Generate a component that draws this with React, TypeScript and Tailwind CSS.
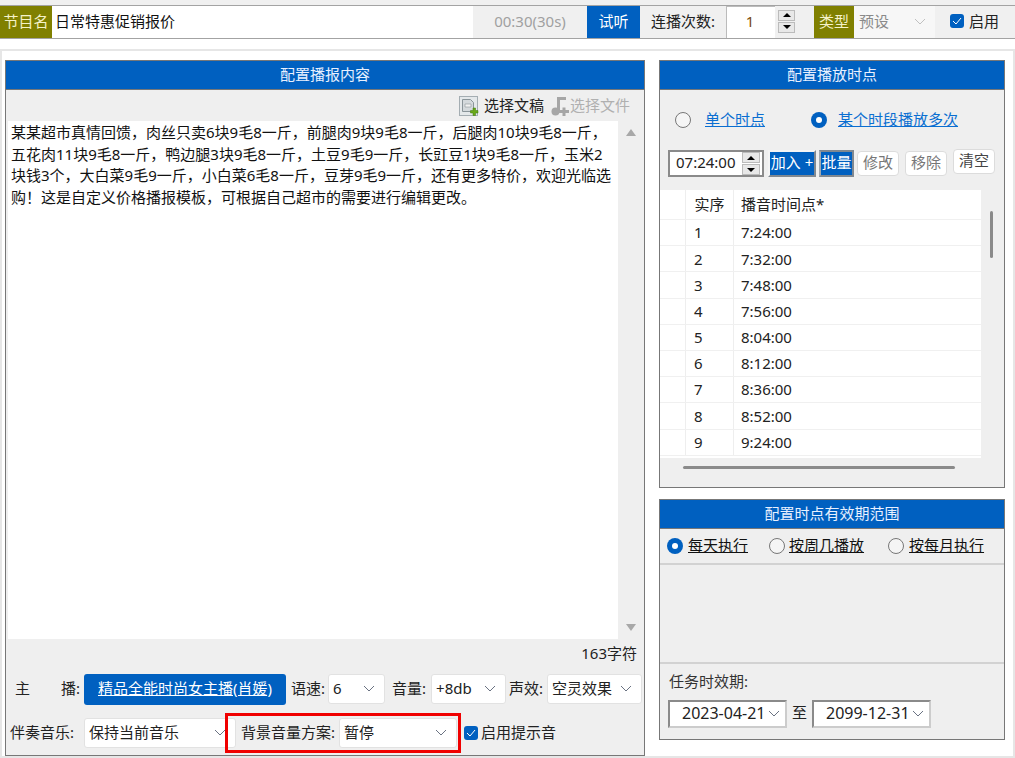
import React from 'react';

const FONT = 'font-["Noto_Sans","Noto_Sans_CJK_SC",sans-serif]';

const ROWS = ['7:24:00', '7:32:00', '7:48:00', '7:56:00', '8:04:00', '8:12:00', '8:36:00', '8:52:00', '9:24:00'];

const Chevron = ({ className = 'text-gray-500' }: { className?: string }) => (
  <svg width="12" height="7" viewBox="0 0 12 7" fill="none" stroke="currentColor" strokeWidth="1" className={className}>
    <path d="M1 1l5 5 5-5" />
  </svg>
);

const Select = ({ value, className }: { value: string; className: string }) => (
  <div className={`flex h-[30px] shrink-0 items-center justify-between rounded-[3px] border border-[#e2e2e2] bg-white pb-[2px] pl-[4px] pr-[9px] text-[#222] ${className}`}>
    <span>{value}</span>
    <Chevron />
  </div>
);

const Radio = ({ on, className = '' }: { on?: boolean; className?: string }) =>
  on ? (
    <span className={`flex size-[16px] shrink-0 items-center justify-center rounded-full bg-[#0060c0] ${className}`}>
      <span className="size-[6px] rounded-full bg-white" />
    </span>
  ) : (
    <span className={`block size-[16px] shrink-0 rounded-full border border-[#777] bg-white/40 ${className}`} />
  );

const Check = () => (
  <span className="flex size-[14px] shrink-0 items-center justify-center rounded-[3px] bg-[#0060c0]">
    <svg width="10" height="8" viewBox="0 0 10 8" fill="none" stroke="white" strokeWidth="1">
      <path d="M1 4l3 3 5-6" />
    </svg>
  </span>
);

const Spinner = ({ className }: { className: string }) => (
  <div className={`flex flex-col gap-[1px] ${className}`}>
    <span className="flex h-[11px] items-center justify-center border border-[#bbb] bg-[#e8e8e8]">
      <span className="size-0 border-x-[4px] border-b-[4px] border-x-transparent border-b-black" />
    </span>
    <span className="flex h-[11px] items-center justify-center border border-[#bbb] bg-[#e8e8e8]">
      <span className="size-0 border-x-[4px] border-t-[4px] border-x-transparent border-t-black" />
    </span>
  </div>
);

const PanelHeader = ({ title }: { title: string }) => (
  <div className="flex h-[29px] shrink-0 items-center justify-center border-b border-[#777] bg-[#0060c0] pb-[2px] text-[#e8f0ff]">
    {title}
  </div>
);

const SmallButton = ({ label, dark }: { label: string; dark?: boolean }) => (
  <div className={`flex h-[25px] w-[42px] items-center justify-center rounded-[4px] border border-[#dcdcdc] bg-white pb-[2px] ${dark ? '-mt-[2px] text-[#444]' : 'text-[#777]'}`}>
    {label}
  </div>
);

const DateBox = ({ value }: { value: string }) => (
  <div className="flex h-[28px] w-[119px] items-center justify-between border-2 border-[#8a8a8a] border-b-[#ccc] border-r-[#ccc] bg-white pb-[1px] pl-[12px] pr-[5px] text-[16px] text-[#222]">
    <span>{value}</span>
    <Chevron />
  </div>
);

const DocIcon = () => (
  <svg width="20" height="20" viewBox="0 0 20 20">
    <rect x="0.5" y="0.5" width="18" height="19" fill="#e4e8ea" stroke="#a4adb2" />
    <path d="M3.500 3.500h8l3 3v9h-11z" fill="#d4d9dc" stroke="#8a9499" />
    <path d="M6 8h6v3H6z" fill="#f2f2f2" stroke="#8a9499" strokeWidth="0.6" />
    <path d="M14 12h2.500v2.500H19V17h-2.500v2.500H14V17h-2.500v-2.500H14z" fill="#6aa818" stroke="#3c7a0c" strokeWidth="0.5" />
  </svg>
);

const MusicIcon = () => (
  <svg width="20" height="20" viewBox="0 0 20 20" fill="#a6a6a6">
    <path d="M7 1h9v3H10v11H7z" />
    <circle cx="5.500" cy="15.500" r="4" />
    <path d="M12.500 11.500h3v2.500h3.500v3h-3.500v3h-3v-3H9v-3h3.500z" />
  </svg>
);

const ArticleText = () => (
  <div className="leading-[21.500px] text-[#111]">
    <div>某某超市真情回馈，肉丝只卖6块9毛8一斤，前腿肉9块9毛8一斤，后腿肉10块9毛8一斤，</div>
    <div>五花肉11块9毛8一斤，鸭边腿3块9毛8一斤，土豆9毛9一斤，长豇豆1块9毛8一斤，玉米2</div>
    <div>块钱3个，大白菜9毛9一斤，小白菜6毛8一斤，豆芽9毛9一斤，还有更多特价，欢迎光临选</div>
    <div>购！这是自定义价格播报模板，可根据自己超市的需要进行编辑更改。</div>
  </div>
);

export default function App() {
  return (
    <div className={`${FONT} flex h-[758px] w-[1015px] flex-col overflow-hidden bg-white text-[15px] text-[#222]`}>
      <div className="h-[5px] shrink-0 bg-[#f0f0f0]" />

      {/* top bar */}
      <div className="flex h-[34px] shrink-0 items-stretch border-y border-[#a3a3a3] bg-[#f0f0f0] [&>div]:pb-[2px]">
        <div className="flex w-[52px] items-center justify-center bg-[#808000] text-[#f5f2c8]">节目名</div>
        <div className="flex w-[421px] items-center bg-white pl-[3px] text-[#111]">日常特惠促销报价</div>
        <div className="flex w-[114px] items-center justify-center text-[#a0a0a0]">00:30(30s)</div>
        <div className="flex w-[53px] items-center justify-center bg-[#0060c0] text-white">试听</div>
        <div className="ml-[11px] flex w-[75px] items-center text-[#222]">连播次数:</div>
        <div className="flex w-[49px] items-center justify-center border-l border-t border-[#bbb] bg-white pr-[2px] text-[#7a4a10]">1</div>
        <Spinner className="ml-[3px] w-[17px] justify-center" />
        <div className="ml-[19px] flex w-[40px] items-center justify-center bg-[#808000] text-[#f5f2c8]">类型</div>
        <div className="flex w-[81px] items-center justify-between bg-[#f7f7f7] pl-[5px] pr-[9px] text-[#8a8a8a]">
          <span>预设</span>
          <Chevron className="text-[#c0c0c0]" />
        </div>
        <div className="ml-[15px] flex items-center gap-[5px]">
          <Check />
          <span>启用</span>
        </div>
      </div>

      <div className="h-[10px] shrink-0" />

      {/* main frame */}
      <div className="flex flex-1 gap-[14px] border-2 border-[#e6e6e6] pl-[3px] pr-[8px] pt-[9px]">
        {/* left column */}
        <div className="flex h-[696px] w-[640px] shrink-0 flex-col border border-[#777] bg-[#efefef]">
          <PanelHeader title="配置播报内容" />
          <div className="flex h-[31px] shrink-0 items-center justify-end gap-[5px] pr-[14px]">
            <DocIcon />
            <span className="text-[#222]">选择文稿</span>
            <div className="ml-[1px] flex items-center">
              <MusicIcon />
              <span className="text-[#b0b0b0]">选择文件</span>
            </div>
          </div>
          <div className="flex h-[518px] shrink-0">
            <div className="ml-[2px] w-[610px] bg-white pl-[3px] pt-[1px]">
              <ArticleText />
            </div>
            <div className="flex flex-1 flex-col items-center justify-between py-[8px]">
              <span className="size-0 border-x-[5px] border-b-[7px] border-x-transparent border-b-[#a8a8a8]" />
              <span className="size-0 border-x-[5px] border-t-[7px] border-x-transparent border-t-[#a8a8a8]" />
            </div>
          </div>
          <div className="flex h-[34px] shrink-0 items-center justify-end pb-[5px] pr-[7px] text-[#222]">163字符</div>

          <div className="flex h-[32px] shrink-0 items-center">
            <div className="ml-[9px] flex w-[69px] justify-between pb-[2px] pr-[4px]">
              <span>主</span>
              <span>播:</span>
            </div>
            <div className="flex h-[31px] w-[202px] shrink-0 items-center justify-center rounded-[3px] bg-[#0060c0] pb-[2px] text-white underline">
              精品全能时尚女主播(肖媛)
            </div>
            <span className="ml-[5px] pb-[2px]">语速:</span>
            <Select value="6" className="ml-[3px] w-[57px]" />
            <span className="ml-[7px] pb-[2px]">音量:</span>
            <Select value="+8db" className="ml-[5px] w-[75px]" />
            <span className="ml-[3px] pb-[2px]">声效:</span>
            <Select value="空灵效果" className="ml-[4px] w-[95px]" />
          </div>

          <div className="relative mt-[12px] flex h-[32px] shrink-0 items-center">
            <span className="ml-[4px] w-[74px] pb-[2px]">伴奏音乐:</span>
            <Select value="保持当前音乐" className="w-[152px]" />
            <span className="ml-[5px] w-[98px] shrink-0 pb-[2px]">背景音量方案:</span>
            <Select value="暂停" className="w-[118px]" />
            <div className="ml-[7px] flex items-center gap-[3px]">
              <Check />
              <span className="pb-[2px]">启用提示音</span>
            </div>
            {/* red annotation box over the row */}
            <div className="pointer-events-none absolute left-[219px] top-[-4px] h-[40px] w-[236px] border-[3px] border-[#f00000]" />
          </div>
        </div>

        {/* right column */}
        <div className="flex w-[346px] shrink-0 flex-col">
          <div className="flex h-[428px] shrink-0 flex-col border border-[#777] bg-[#efefef]">
            <PanelHeader title="配置播放时点" />
            <div className="mt-[20px] flex h-[20px] shrink-0 items-center pl-[15px]">
              <Radio />
              <a className="ml-[14px] pb-[1px] text-[#0a6ed1] underline">单个时点</a>
              <Radio on className="ml-[46px]" />
              <a className="ml-[11px] pb-[1px] text-[#0a6ed1] underline">某个时段播放多次</a>
            </div>
            <div className="mt-[20px] flex h-[27px] shrink-0 items-center pl-[8px]">
              <div className="flex h-[27px] w-[96px] shrink-0 items-center justify-between border-2 border-[#8a8a8a] bg-white pl-[6px] pr-[2px] text-[#222]">
                <span className="pb-[2px]">07:24:00</span>
                <Spinner className="w-[18px]" />
              </div>
              <div className="ml-[4px] flex h-[27px] w-[48px] shrink-0 items-center justify-center border-2 border-[#f4f4f4] border-b-[#808890] border-r-[#808890] bg-[#0060c0] pb-[2px] text-white">加入 +</div>
              <div className="ml-[3px] flex h-[27px] w-[35px] shrink-0 items-center justify-center border-2 border-[#808890] border-l-[#a0a8b0] bg-[#0060c0] pb-[2px] text-white">批量</div>
              <div className="ml-[3px] flex gap-[6px]">
                <SmallButton label="修改" />
                <SmallButton label="移除" />
                <SmallButton label="清空" dark />
              </div>
            </div>

            <div className="mt-[13px] flex min-h-0 flex-1">
              <div className="h-[268px] w-[321px] overflow-hidden bg-white">
                <div className="flex h-[30px] border-b border-[#f0f0f0]">
                  <div className="w-[26px] border-r border-[#eee]" />
                  <div className="flex w-[48px] items-center justify-center border-r border-[#eee]">实序</div>
                  <div className="flex flex-1 items-center pl-[7px]">播音时间点*</div>
                </div>
                {ROWS.map((time, i) => (
                  <div key={i} className="flex h-[26.200px] border-b border-[#f0f0f0] text-[#222]">
                    <div className="w-[26px] border-r border-[#eee]" />
                    <div className="flex w-[48px] items-center border-r border-[#eee] pl-[8px]">{i + 1}</div>
                    <div className="flex flex-1 items-center pl-[7px]">{time}</div>
                  </div>
                ))}
              </div>
              <div className="ml-[9px] mt-[21px] h-[47px] w-[3px] rounded-full bg-[#8a8a8a]" />
            </div>
            <div className="mb-[18px] ml-[23px] h-[3px] w-[272px] rounded-full bg-[#8a8a8a]" />
          </div>

          <div className="mt-[11px] flex h-[241px] shrink-0 flex-col border border-[#777] bg-[#efefef]">
            <PanelHeader title="配置时点有效期范围" />
            <div className="flex h-[36px] shrink-0 items-center border-b-2 border-[#d2d2d2] pl-[7px] text-[#111]">
              <Radio on />
              <span className="ml-[5px] pb-[2px] underline">每天执行</span>
              <Radio className="ml-[21px]" />
              <span className="ml-[4px] pb-[2px] underline">按周几播放</span>
              <Radio className="ml-[24px]" />
              <span className="ml-[5px] pb-[2px] underline">按每月执行</span>
            </div>
            <div className="h-[99px] shrink-0 border-b-2 border-[#d2d2d2]" />
            <div className="mt-[6px] pl-[9px] text-[#333]">任务时效期:</div>
            <div className="mt-[7px] flex items-center pl-[8px]">
              <DateBox value="2023-04-21" />
              <span className="mx-[5px] pb-[2px]">至</span>
              <DateBox value="2099-12-31" />
            </div>
          </div>
        </div>
      </div>
    </div>
  );
}
